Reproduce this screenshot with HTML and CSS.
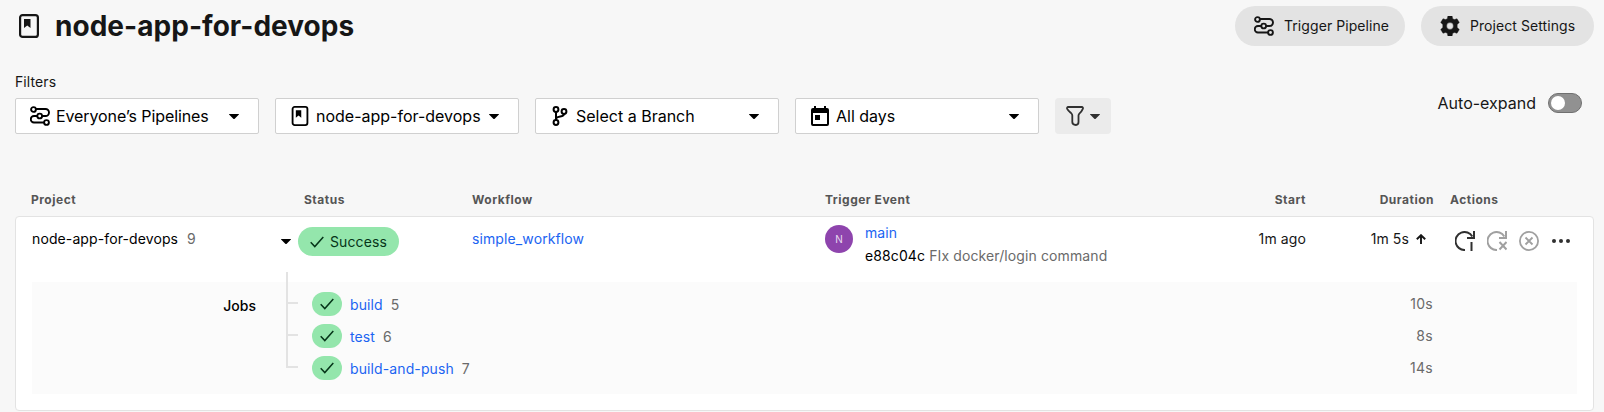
FILE: index.html
```html
<!DOCTYPE html>
<html lang="en">
<head>
<meta charset="utf-8">
<title>node-app-for-devops pipelines</title>
<link rel="stylesheet" href="styles.css">
</head>
<body>
<svg class="defs" width="0" height="0" aria-hidden="true">
  <symbol id="pipeline" viewBox="0 0 20 20">
    <g fill="none" stroke="currentColor" stroke-width="1.900">
      <circle cx="3.500" cy="3.500" r="2.400"/><circle cx="9.700" cy="10" r="2.400"/><circle cx="16.500" cy="16.500" r="2.400"/>
      <path d="M6 3h9.500a3.500 3.500 0 0 1 0 7H12M7.300 10H4a3 3 0 0 0 0 6.500h10"/>
    </g>
  </symbol>
  <symbol id="project" viewBox="0 0 20 24">
    <rect x="1.100" y="1.100" width="17.800" height="21.800" rx="2.500" fill="none" stroke="currentColor" stroke-width="2.200"/>
    <path d="M5 5h6.500v9l-3.250-2.500L5 14z" fill="currentColor"/>
  </symbol>
  <symbol id="caret" viewBox="0 0 10 5"><path d="M.3 0h9.400c.3 0 .4.3.2.5L5.700 4.700c-.4.4-1 .4-1.400 0L.1.500C-.1.300 0 0 .3 0z" fill="currentColor"/></symbol>
  <symbol id="check" viewBox="0 0 14 12"><path d="M.7 6.300 4.800 10.600 13.300 1" fill="none" stroke="currentColor" stroke-width="1.500"/></symbol>
</svg>

<header class="topbar">
  <svg class="title-icon"><use href="#project"/></svg>
  <h1 class="title">node-app-for-devops</h1>
  <button class="pill trigger"><svg class="icon20"><use href="#pipeline"/></svg><span>Trigger Pipeline</span></button>
  <button class="pill settings">
    <svg class="icon20" viewBox="0 0 20 20"><path fill="currentColor" fill-rule="evenodd" d="M7.900 0h4.200l.6 2.700 1.600.9 2.700-.9 2.300 3.800-2.100 2v3l2.100 2-2.300 3.800-2.700-.9-1.600.9-.6 2.700H7.900l-.6-2.700-1.600-.9-2.700.9L.7 13.500l2.100-2v-3l-2.100-2L3 2.700l2.700.9 1.600-.9zM10 6.600a3.400 3.400 0 1 0 0 6.800 3.400 3.400 0 0 0 0-6.800z" stroke="currentColor" stroke-width=".4" stroke-linejoin="round"/></svg>
    <span>Project Settings</span>
  </button>
</header>

<section class="filters">
  <div class="filter-group">
    <div class="filter-label">Filters</div>
    <div class="filter-row">
      <div class="select"><svg class="icon20"><use href="#pipeline"/></svg><span class="select-text tight">Everyone’s Pipelines</span><svg class="caret"><use href="#caret"/></svg></div>
      <div class="select"><svg class="icon20"><use href="#project"/></svg><span class="select-text">node-app-for-devops</span><svg class="caret"><use href="#caret"/></svg></div>
      <div class="select">
        <svg class="icon20" viewBox="0 0 20 20"><g fill="none" stroke="currentColor" stroke-width="2"><circle cx="6" cy="3.500" r="2.400"/><circle cx="6" cy="16.500" r="2.400"/><circle cx="14" cy="5.500" r="2.400"/><path d="M6 6v8M14 8c0 3.500-6.500 1.500-8 4.500"/></g></svg>
        <span class="select-text">Select a Branch</span><svg class="caret"><use href="#caret"/></svg>
      </div>
      <div class="select">
        <svg class="icon20" viewBox="0 0 20 20"><path fill="currentColor" fill-rule="evenodd" d="M4 0h2v2h8V0h2v2h1a2 2 0 0 1 2 2v14a2 2 0 0 1-2 2H3a2 2 0 0 1-2-2V4a2 2 0 0 1 2-2h1zM3 7v11h14V7zM5 9h5v5H5z"/></svg>
        <span class="select-text">All days</span><svg class="caret"><use href="#caret"/></svg>
      </div>
      <button class="funnel">
        <svg class="funnel-icon" viewBox="0 0 18 20"><path d="M2.200 1h13.600c1 0 1.500 1 1 1.900-.7 1.600-1.600 3-3 4.200-.8.700-1.300 1.300-1.300 2.500v6.500c0 2-1 2.900-2.600 2.900-1.800 0-3.600-.9-3.600-2.900V9.600c0-1.200-.4-1.800-1.200-2.500C3.300 5.500 2 4.500 1.200 2.900.8 2 1.200 1 2.200 1z" fill="none" stroke="currentColor" stroke-width="1.800"/></svg>
        <svg class="caret"><use href="#caret"/></svg>
      </button>
    </div>
  </div>
  <div class="auto-expand"><span>Auto-expand</span><span class="toggle"><i class="knob"></i></span></div>
</section>

<div class="columns table-head">
  <span class="c-project">Project</span><span class="c-status">Status</span><span>Workflow</span><span>Trigger Event</span>
  <span class="right">Start</span><span class="right">Duration</span><span class="c-actions">Actions</span>
</div>

<main class="card">
  <div class="columns pipeline">
    <div class="project"><span>node-app-for-devops</span><span class="num">9</span></div>
    <div class="status"><svg class="caret row-caret"><use href="#caret"/></svg><span class="badge"><svg class="check"><use href="#check"/></svg>Success</span></div>
    <a class="link workflow">simple_workflow</a>
    <div class="event">
      <span class="avatar">N</span>
      <div class="event-text"><a class="link">main</a><div><span>e88c04c</span> <span class="muted">FIx docker/login command</span></div></div>
    </div>
    <span class="right start">1m ago</span>
    <span class="duration">1m 5s<svg class="arrow" viewBox="0 0 10 10"><path d="M5 10V1.500M.8 5.300 5 1.200l4.200 4.100" fill="none" stroke="currentColor" stroke-width="1.900"/></svg></span>
    <div class="actions">
      <svg class="icon20" viewBox="0 0 20 20"><g fill="none" stroke="#303030" stroke-width="2"><path d="M10 19A9 9 0 1 1 17.300 5.500"/><path d="M19 0v7h-7M16.500 11v9"/></g></svg>
      <svg class="icon20" viewBox="0 0 20 20"><g fill="none" stroke="#a0a0a0" stroke-width="2"><path d="M10 19A9 9 0 1 1 17.300 5.500"/><path d="M19 0v7h-7M12.500 11l7 7.500M19.500 11l-7 7.500"/></g></svg>
      <svg class="icon20" viewBox="0 0 20 20"><g fill="none" stroke="#a0a0a0" stroke-width="1.800"><circle cx="10" cy="10" r="9.100"/><path d="m6.500 6.500 7 7m0-7-7 7"/></g></svg>
      <svg class="icon20" viewBox="0 0 20 20"><g fill="#303030"><circle cx="3" cy="10" r="2"/><circle cx="10" cy="10" r="2"/><circle cx="17" cy="10" r="2"/></g></svg>
    </div>
  </div>

  <section class="jobs">
    <div class="jobs-label">Jobs</div>
    <svg class="tree" viewBox="0 0 12 96"><path d="M1 0v95h11M1 31h11M1 63h11" fill="none" stroke="#e3e3e3" stroke-width="2"/></svg>
    <div class="job-list">
      <div class="job"><span class="job-badge"><svg class="check"><use href="#check"/></svg></span><a class="link">build</a><span class="num">5</span><span class="job-time">10s</span></div>
      <div class="job"><span class="job-badge"><svg class="check"><use href="#check"/></svg></span><a class="link">test</a><span class="num">6</span><span class="job-time">8s</span></div>
      <div class="job"><span class="job-badge"><svg class="check"><use href="#check"/></svg></span><a class="link">build-and-push</a><span class="num">7</span><span class="job-time">14s</span></div>
    </div>
  </section>
</main>
</body>
</html>
```
FILE: styles.css
```css
* { box-sizing: border-box; }
body {
  margin: 0;
  height: 412px;
  overflow: hidden;
  padding: 6px 10px 0 15px;
  background: #f7f7f7;
  color: #161616;
  font: 14px/20px Inter, "Liberation Sans", sans-serif;
}
svg { display: block; flex: none; }
.defs { position: absolute; }
button { border: 0; font: inherit; color: inherit; }
.icon20 { width: 20px; height: 20px; }

.topbar { display: flex; align-items: center; height: 40px; }
.title-icon { width: 20px; height: 24px; margin-left: 4px; }
.title { margin: 0 auto 0 16px; font-size: 28px; line-height: 40px; font-weight: 700; letter-spacing: .04px; }
.pill {
  display: flex;
  align-items: center;
  gap: 10px;
  height: 40px;
  padding: 0 0 0 19px;
  border-radius: 20px;
  background: #e3e3e3;
  letter-spacing: .07px;
  white-space: nowrap;
}
.trigger { width: 170px; }
.settings { width: 173px; margin-left: 16px; }

.filters { display: flex; justify-content: space-between; margin-top: 26px; height: 62px; }
.filter-label { line-height: 20px; letter-spacing: .1px; }
.filter-row { display: flex; gap: 16px; margin-top: 6px; }
.select {
  display: flex;
  align-items: center;
  width: 244px;
  height: 36px;
  padding: 0 19px 0 14px;
  border: 1px solid #d0d0d0;
  border-radius: 2px;
  background: #fff;
  color: #000;
  font-size: 16px;
}
.select-text { margin: 0 auto 0 6px; white-space: nowrap; }
.tight { letter-spacing: -.1px; }
.caret { width: 10px; height: 5px; }
.funnel {
  display: flex;
  align-items: center;
  gap: 6px;
  width: 56px;
  height: 36px;
  padding: 0 0 0 11px;
  border-radius: 4px;
  background: #ebebeb;
  color: #303030;
}
.funnel-icon { width: 18px; height: 20px; }
.auto-expand { display: flex; align-items: center; gap: 12px; height: 20px; margin: 21px 12px 0 0; font-size: 16px; }
.toggle { width: 34px; height: 20px; padding: 2px; border: 1px solid #707070; border-radius: 10px; background: #919191; }
.knob { display: block; width: 14px; height: 14px; border-radius: 50%; background: #fff; }

.columns { display: grid; grid-template-columns: 249px 191px 353px 380px 101px 127px 1fr; }
.table-head {
  grid-template-columns: 249px 192px 353px 380px 101px 128px 1fr;
  margin-top: 56px;
  height: 26px;
  padding-left: 16px;
  color: #555;
  font-size: 12px;
  line-height: 20px;
  font-weight: 700;
  letter-spacing: .5px;
}
.c-status { padding-left: 24px; }
.right { text-align: right; }
.c-actions { padding-left: 16px; }

.card { width: 1579px; height: 195px; border: 1px solid #e3e3e3; border-radius: 4px; background: #fff; letter-spacing: .11px; }
.pipeline { height: 65px; padding-left: 16px; }
.project { padding-top: 12px; color: #000; }
.num { margin-left: 8px; color: #6a6a6a; }
.project .num { margin-left: 9px; }
.status { display: flex; align-items: center; gap: 7px; height: 29px; margin-top: 10px; color: #000; }
.badge {
  display: flex;
  align-items: center;
  gap: 6px;
  width: 101px;
  height: 29px;
  padding-left: 12px;
  border-radius: 15px;
  background: #94e6ac;
  color: #063519;
}
.check { width: 14px; height: 12px; color: #063519; }
.link { color: #1b64f2; }
.workflow { padding-top: 12px; }
.event { display: flex; gap: 12px; padding-top: 8px; }
.avatar { width: 28px; height: 28px; border-radius: 50%; background: #8e44ad; color: #e8daef; font-size: 10px; line-height: 28px; text-align: center; }
.event-text { line-height: 23px; margin-top: -4px; white-space: nowrap; color: #000; }
.muted { color: #6a6a6a; }
.start { padding-top: 12px; }
.duration { display: flex; justify-content: flex-end; gap: 7px; height: 20px; margin-top: 12px; padding-right: 7px; }
.arrow { width: 10px; height: 10px; margin-top: 5px; }
.actions { display: flex; gap: 12px; padding: 14px 0 0 22px; }

.jobs { display: flex; width: 1545px; height: 112px; margin-left: 16px; padding-top: 10px; background: #fbfbfb; }
.jobs-label { width: 224px; padding-top: 4px; text-align: right; color: #000; font-weight: 500; letter-spacing: 0; }
.tree { width: 12px; height: 96px; margin: -20px 14px 0 30px; }
.job-list { display: flex; flex-direction: column; gap: 8px; flex: 1; }
.job { display: flex; align-items: center; height: 24px; line-height: 24px; }
.job .link, .job .num { padding-top: 2px; }
.job-badge { display: flex; align-items: center; justify-content: center; width: 30px; height: 24px; margin-right: 8px; border-radius: 12px; background: #94e6ac; }
.job-time { margin: 0 144px 0 auto; color: #6a6a6a; letter-spacing: .3px; }
```
